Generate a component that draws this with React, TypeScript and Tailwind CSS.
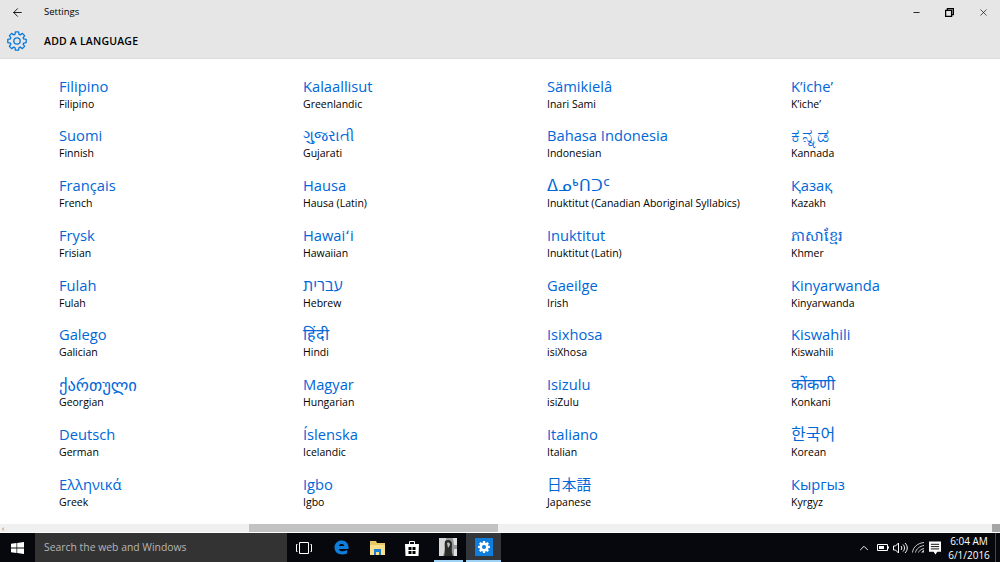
import { ArrowLeft, ChevronUp, Minus, X } from 'lucide-react'

const FONT = "font-['Open_Sans','DejaVu_Sans','Noto_Sans_CJK_JP','Noto_Sans_CJK_KR',sans-serif]"

// Native names whose fallback font draws smaller than the reference.
const NAME_SIZES: Record<string, string> = {
  'ქართული': 'text-[16.500px]',
  'हिंदी': 'text-[16px]',
  'עברית': 'text-[16px]',
  'ಕನ್ನಡ': 'text-[19px] tracking-[1.500px]',
  'कोंकणी': 'text-[16px]',
  '한국어': 'text-[16px]',
  'ᐃᓄᒃᑎᑐᑦ': 'text-[15.500px] font-light'
}

const COLUMNS: [string, string][][] = [
  [
    ['Filipino', 'Filipino'],
    ['Suomi', 'Finnish'],
    ['Français', 'French'],
    ['Frysk', 'Frisian'],
    ['Fulah', 'Fulah'],
    ['Galego', 'Galician'],
    ['ქართული', 'Georgian'],
    ['Deutsch', 'German'],
    ['Ελληνικά', 'Greek']
  ],
  [
    ['Kalaallisut', 'Greenlandic'],
    ['ગુજરાતી', 'Gujarati'],
    ['Hausa', 'Hausa (Latin)'],
    ['Hawaiʻi', 'Hawaiian'],
    ['עברית', 'Hebrew'],
    ['हिंदी', 'Hindi'],
    ['Magyar', 'Hungarian'],
    ['Íslenska', 'Icelandic'],
    ['Igbo', 'Igbo']
  ],
  [
    ['Sämikielâ', 'Inari Sami'],
    ['Bahasa Indonesia', 'Indonesian'],
    ['ᐃᓄᒃᑎᑐᑦ', 'Inuktitut (Canadian Aboriginal Syllabics)'],
    ['Inuktitut', 'Inuktitut (Latin)'],
    ['Gaeilge', 'Irish'],
    ['Isixhosa', 'isiXhosa'],
    ['Isizulu', 'isiZulu'],
    ['Italiano', 'Italian'],
    ['日本語', 'Japanese']
  ],
  [
    ['K’iche’', 'K’iche’'],
    ['ಕನ್ನಡ', 'Kannada'],
    ['Қазақ', 'Kazakh'],
    ['ភាសាខ្មែរ', 'Khmer'],
    ['Kinyarwanda', 'Kinyarwanda'],
    ['Kiswahili', 'Kiswahili'],
    ['कोंकणी', 'Konkani'],
    ['한국어', 'Korean'],
    ['Кыргыз', 'Kyrgyz']
  ]
]

/** Eight-tooth gear outline centred on 12,12 in a 24 box. */
function gearPath(outer: number, inner: number): string {
  const points: string[] = []
  for (let i = 0; i < 8; i++) {
    const a = (i * Math.PI) / 4
    const steps: [number, number][] = [
      [-0.3, inner],
      [-0.17, outer],
      [0.17, outer],
      [0.3, inner]
    ]
    for (const [da, r] of steps) {
      points.push(`${(12 + r * Math.cos(a + da)).toFixed(2)} ${(12 + r * Math.sin(a + da)).toFixed(2)}`)
    }
  }
  return `M${points.join('L')}Z`
}

function LanguageItem({ name, english }: { name: string; english: string }): React.JSX.Element {
  return (
    <div className="h-[49.75px] whitespace-nowrap">
      <div className={`h-[21px] leading-[21px] text-[#0067d8] ${NAME_SIZES[name] ?? 'text-[14.700px]'}`}>{name}</div>
      <div className="h-[14px] text-[10.500px] leading-[14px] text-black">{english}</div>
    </div>
  )
}

function TaskbarApps(): React.JSX.Element {
  return (
    <div className="flex h-full items-center">
      <div className="flex w-[34px] justify-center">
        <svg width="16" height="12" viewBox="0 0 16 12" fill="none" stroke="white">
          <path d="M3.500.5h9v11h-9z" />
          <path d="M1.500 2.500H.5v7h1M14.500 2.500h1v7h-1" />
        </svg>
      </div>
      <div className="flex w-[40px] justify-center">
        <svg width="15" height="15" viewBox="0 0 16 16">
          <path
            d="M.5 7.500C1 3 4.200.5 8 .5c4.500 0 7.500 3 7.500 7.500v1.500H5.200c.4 3 4.800 3.300 8.800 1.200v3.600c-5.500 2.400-13.500 1.300-13.500-6.800zM5.200 6.300h5.600C10.700 3.500 5.800 3.500 5.200 6.300z"
            fill="#0f7ddb"
          />
        </svg>
      </div>
      <div className="flex w-[33px] justify-center">
        <svg width="15" height="14" viewBox="0 0 15 14">
          <path d="M0 0h6l1 2h8v12H0z" fill="#e8c766" />
          <path d="M0 4h15v10H0z" fill="#fbe08a" />
          <path d="M4 8h7v6H9v-3H6v3H4z" fill="#1a7fd4" />
        </svg>
      </div>
      <div className="flex w-[36px] justify-center">
        <svg width="14" height="16" viewBox="0 0 14 16">
          <path d="M0 4h14l-.5 12H.5z" fill="white" />
          <path d="M4.500 4V1.500h5V4" fill="none" stroke="white" />
          <path d="M3.500 7h3v3h-3zM7.500 7h3v3h-3zM3.500 11h3v3h-3zM7.500 11h3v3h-3z" fill="black" />
        </svg>
      </div>
      <div className="flex h-full w-[36px] flex-col items-center justify-end">
        <svg className="mb-[4px]" width="18" height="18" viewBox="0 0 18 18">
          <path d="M0 0h18v18H0z" fill="#9a9a9a" />
          <path d="M0 0h7v6L4 18H0z" fill="#d8d8d8" />
          <path d="M6 3c3-2 7-1 7 3s-1 8 1 12H5c2-5 0-10 1-15z" fill="#2a2a2a" />
          <path d="M14 0h4v7h-3zM15 11h3v7h-3z" fill="#e0e0e0" />
          <path d="M8 5c2-1 3 0 3 2l-2 3z" fill="#bdbdbd" />
        </svg>
        <div className="h-[2px] w-[29px] bg-[#9fd3f5]" />
      </div>
      <div className="flex h-full w-[35px] flex-col items-center justify-end bg-[#33363b]">
        <div className="mb-[4px] flex h-[18px] w-[18px] items-center justify-center bg-[#0f7ddb]">
          <svg width="12" height="12" viewBox="0 0 24 24">
            <path d={gearPath(12, 9)} fill="white" />
            <circle cx="12" cy="12" r="4" fill="#0f7ddb" />
          </svg>
        </div>
        <div className="h-[2px] w-full bg-[#9fd3f5]" />
      </div>
    </div>
  )
}

function SystemTray(): React.JSX.Element {
  return (
    <div className="ml-auto flex h-full items-center text-white">
      <ChevronUp size={14} strokeWidth={1.6} />
      <svg className="ml-[6px]" width="12" height="9" viewBox="0 0 12 9" fill="none" stroke="white">
        <path d="M.5 1.500h10v6H.5z" />
        <path d="M2 3h5v3H2z" fill="white" stroke="none" />
        <path d="M11.500 3.500v2" />
      </svg>
      <svg className="ml-[4px]" width="15" height="12" viewBox="0 0 15 12" fill="none" stroke="white">
        <path d="M.5 4v4h2l3 3V1l-3 3z" />
        <path d="M8 4c1 1 1 3 0 4M10 2.500c2 2 2 5 0 7M12 1c3 3 3 7 0 10" />
      </svg>
      <svg className="ml-[4px]" width="13" height="11" viewBox="0 0 13 11" fill="none" stroke="#cccccc">
        <path d="M.5 10.500C1 5 6 1 12 .5M3.500 10.500C4 7 8 4 12 3.500M6.500 10.500C7 9 9 7 12 6.500" />
        <path d="M9 10.500h3v-3z" fill="#cccccc" stroke="none" />
      </svg>
      <svg className="ml-[4px]" width="12" height="14" viewBox="0 0 13 14">
        <path d="M0 0h13v11H9l-2 3-2-3H0z" fill="white" />
        <path d="M2 3h9M2 5.500h9M2 8h9" stroke="black" />
      </svg>
      <div className="ml-[5px] w-[46px] text-center text-[10px] leading-[14px]">
        <div>6:04 AM</div>
        <div>6/1/2016</div>
      </div>
      <div className="ml-[3px] h-full w-[5px] border-l border-[#444444]" />
    </div>
  )
}

export default function App(): React.JSX.Element {
  return (
    <div className={`flex h-[562px] w-[1000px] flex-col overflow-hidden bg-white ${FONT}`}>
      {/* Title area */}
      <header className="h-[59px] shrink-0 border-b border-[#dcdcdc] bg-[#e6e6e6] text-black">
        <div className="flex h-[24px] items-center">
          <div className="flex w-[44px] pl-[11px]">
            <ArrowLeft size={13} strokeWidth={1.6} />
          </div>
          <span className="text-[9.500px]">Settings</span>
          <div className="ml-auto flex items-center">
            <div className="flex w-[33px] justify-center">
              <Minus size={9} strokeWidth={2.2} />
            </div>
            <div className="flex w-[33px] justify-center">
              <svg width="9" height="9" viewBox="0 0 9 9" fill="none" stroke="black" strokeWidth="1.300">
                <path d="M.6 2.400h6v6h-6zM2.400 2V.6h6v6H7" />
              </svg>
            </div>
            <div className="flex w-[34px] justify-center">
              <X size={11} strokeWidth={1.4} />
            </div>
          </div>
        </div>
        <div className="flex h-[34px] items-center">
          <div className="flex w-[44px] pl-[7px]">
            <svg width="20" height="20" viewBox="0 0 24 24" fill="none" stroke="#0a78dc" strokeWidth="1.600" strokeLinejoin="round">
              <path d={gearPath(11.2, 8.3)} />
              <circle cx="12" cy="12" r="3.800" />
            </svg>
          </div>
          <span className="pt-px text-[10.500px] font-semibold tracking-[0.2px]">ADD A LANGUAGE</span>
        </div>
      </header>

      {/* Language grid */}
      <main className="flex min-h-0 flex-1 pl-[59px] pt-[16.500px]">
        {COLUMNS.map((column) => (
          <div key={column[0][0]} className="w-[244px] shrink-0">
            {column.map(([name, english]) => (
              <LanguageItem key={english} name={name} english={english} />
            ))}
          </div>
        ))}
      </main>

      {/* Horizontal scrollbar */}
      <div className="flex h-[8px] shrink-0 items-center bg-[#f0f0f0]">
        <span className="ml-[2px] w-[4px] text-[7px] leading-none text-[#555555]">‹</span>
        <div className="ml-[243px] h-full w-[249px] bg-[#c2c2c2]" />
        <div className="ml-auto h-full w-[8px] bg-[#a6a6a6]" />
      </div>
      <div className="h-px shrink-0 bg-white" />

      {/* Taskbar */}
      <footer className="flex h-[29px] shrink-0 items-center bg-[#06080d]">
        <div className="flex w-[35px] justify-center">
          <svg width="13" height="12" viewBox="0 0 13 12" fill="white">
            <path d="M0 1.800 5.500 1v4.600H0zM6.200.9 13 0v5.600H6.200zM0 6.400h5.500V11L0 10.200zM6.200 6.400H13V12l-6.800-.9z" />
          </svg>
        </div>
        <div className="flex h-full w-[252px] items-center bg-[#333333] pl-[9px] text-[10.400px] text-[#b5b5b5]">
          Search the web and Windows
        </div>
        <TaskbarApps />
        <SystemTray />
      </footer>
    </div>
  )
}
